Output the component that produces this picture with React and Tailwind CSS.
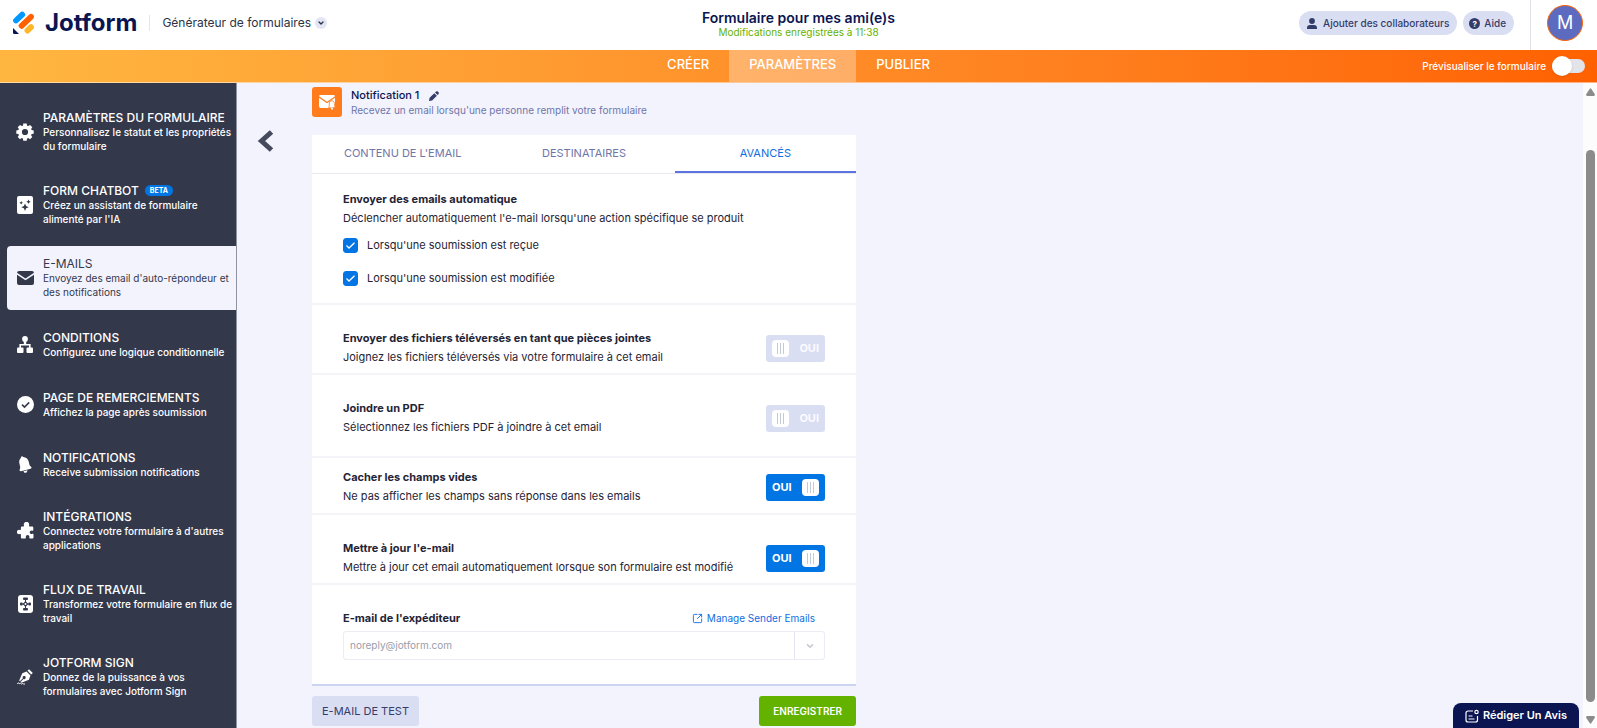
import React from 'react';
import { ChevronDown, SquareArrowOutUpRight } from 'lucide-react';

const GearIcon = () => (
  <svg viewBox="0 0 18 18" className="size-[18px]" fill="currentColor">
    <path
      fillRule="evenodd"
      d="M7.300.6h3.400l.4 2.100 1.100.4L14 1.900l2.300 2.300-1.200 1.800.5 1.100 2.100.4v3.200l-2.100.4-.5 1.100 1.200 1.800-2.300 2.300-1.800-1.200-1.100.5-.4 2.100H7.300l-.4-2.100-1.100-.5L4 16.300 1.700 14l1.200-1.800-.5-1.100-2.100-.4V7.500l2.100-.4.5-1.100-1.200-1.800L4 1.900l1.800 1.200 1.100-.4zM9 5.900a3.100 3.100 0 1 0 0 6.200 3.100 3.100 0 0 0 0-6.200z"
    />
  </svg>
);
const ChatbotIcon = () => (
  <svg viewBox="0 0 16 18" className="h-[18px] w-4">
    <rect width="16" height="18" rx="2" fill="currentColor" />
    <g fill="#34384b">
      <path d="M8 7.500l1.100 2.600L11.700 11.200l-2.600 1.100L8 15l-1.100-2.700-2.600-1.100 2.600-1.100z" />
      <path d="M11.500 3.500l.7 1.500 1.500.7-1.500.7-.7 1.500-.7-1.500-1.500-.7 1.500-.7z" />
      <path d="M4.200 5l.6 1.200 1.200.6-1.200.6-.6 1.200-.6-1.200-1.200-.6 1.200-.6z" />
    </g>
  </svg>
);
const MailIcon = () => (
  <svg viewBox="0 0 17 14" className="h-3.5 w-[17px]" fill="currentColor">
    <path d="M2 0h13a2 2 0 0 1 2 1.700L8.500 7.500 0 1.700A2 2 0 0 1 2 0z" />
    <path d="M0 3.700l8.500 5.600L17 3.700V12a2 2 0 0 1-2 2H2a2 2 0 0 1-2-2z" />
  </svg>
);
const TreeIcon = () => (
  <svg viewBox="0 0 16 17" className="h-[17px] w-4" fill="currentColor">
    <circle cx="8" cy="3" r="2.900" />
    <path d="M6.800 4h2.400v4h4.400v4h-1.600V9.600H4V12H2.400V8h4.400z" />
    <rect x="0" y="11.500" width="6.500" height="5.500" rx="1" />
    <rect x="9.500" y="11.500" width="6.500" height="5.500" rx="1" />
  </svg>
);
const CheckCircleIcon = () => (
  <svg viewBox="0 0 17 17" className="size-[17px]">
    <circle cx="8.500" cy="8.500" r="8.500" fill="currentColor" />
    <path d="M5 8.600l2.500 2.500 4.700-4.700" fill="none" stroke="#34384b" strokeWidth="1.500" />
  </svg>
);
const BellIcon = () => (
  <svg viewBox="0 0 16 17" className="h-[17px] w-4" fill="currentColor">
    <path d="M4.600.4c.7-.2 1.300.1 1.600.7 2.700.2 4.900 1.900 5.500 4.500l.7 3c.2.900.8 1.700 1.600 2.200.9.600.6 1.700-.3 1.900L4 15.200c-1.100.3-1.800-.7-1.300-1.600.5-1 .7-2 .4-3l-.7-3C1.800 5.200 2.500 3 4 1.700c-.1-.6 0-1.100.6-1.300z" />
    <path d="M6.500 15.200l3.800-1c.2 1.100-.4 2.200-1.500 2.500-1 .3-2-.4-2.300-1.500z" />
  </svg>
);
const PuzzleIcon = () => (
  <svg viewBox="0 0 17 17" className="size-[17px]" fill="currentColor">
    <path d="M7 3.500A2.700 2.700 0 1 1 12 3.500c0 .5.200.9.500 1.100h2.500c.8 0 1.300.5 1.300 1.300v2.300c-.3.400-.8.500-1.300.5a1.700 1.700 0 1 0 0 3.200c.6-.1 1.100 0 1.500.4v2.900c0 .8-.5 1.300-1.300 1.300h-2.400c-.5-.3-.6-.7-.5-1.200a1.800 1.800 0 1 0-3.400 0c.1.500 0 .9-.5 1.200H5.200c-.8 0-1.300-.5-1.300-1.300v-2.700c-.3-.4-.7-.5-1.100-.4A2.200 2.200 0 1 1 2.800 8c.5 0 .9-.1 1.100-.5V5.900c0-.8.500-1.300 1.300-1.300h1.300c.4-.2.500-.6.500-1.100z" />
  </svg>
);
const FlowIcon = () => (
  <svg viewBox="0 0 15 18" className="h-[18px] w-[15px]">
    <rect width="15" height="18" rx="3" fill="currentColor" />
    <g fill="#34384b">
      <rect x="5" y="2.500" width="5" height="2.600" rx="1" />
      <rect x="5" y="12.900" width="5" height="2.600" rx="1" />
      <rect x="2" y="7.500" width="2.600" height="3" rx="1" />
      <rect x="10.400" y="7.500" width="2.600" height="3" rx="1" />
      <path d="M7.500 5.900L10.300 9l-2.800 3.100L4.700 9z" />
      <path d="M7 5h1v8H7zM4 8.500h7v1H4z" />
    </g>
    <circle cx="7.500" cy="9" r="1" fill="currentColor" />
  </svg>
);
const PenIcon = () => (
  <svg viewBox="0 0 16 16" className="size-4">
    <path d="M10.500 1.800l1.500-1.600 3.800 3.800-1.600 1.500z" fill="currentColor" />
    <path d="M9.500 2.500l4 4-1.600 4.200-7.500 3.100-.9-.9 3-3a1.500 1.500 0 1 0-.6-.6l-3 3-.7-.8 3.100-7.200z" fill="currentColor" />
    <path d="M.3 14.800c1-1.500 1.700-1 1.900 0 .9-.8 1.600-.5 2.200.2.700-.8 1.500-.5 2.100 0h1.500" fill="none" stroke="currentColor" />
  </svg>
);

const NAV = [
  { icon: GearIcon, title: 'PARAMÈTRES DU FORMULAIRE', desc: 'Personnalisez le statut et les propriétés du formulaire' },
  { icon: ChatbotIcon, title: 'FORM CHATBOT', badge: 'BETA', desc: "Créez un assistant de formulaire alimenté par l'IA" },
  { icon: MailIcon, title: 'E-MAILS', desc: "Envoyez des email d'auto-répondeur et des notifications", active: true },
  { icon: TreeIcon, title: 'CONDITIONS', desc: 'Configurez une logique conditionnelle' },
  { icon: CheckCircleIcon, title: 'PAGE DE REMERCIEMENTS', desc: 'Affichez la page après soumission' },
  { icon: BellIcon, title: 'NOTIFICATIONS', desc: 'Receive submission notifications' },
  { icon: PuzzleIcon, title: 'INTÉGRATIONS', desc: "Connectez votre formulaire à d'autres applications" },
  { icon: FlowIcon, title: 'FLUX DE TRAVAIL', desc: 'Transformez votre formulaire en flux de travail' },
  { icon: PenIcon, title: 'JOTFORM SIGN', desc: 'Donnez de la puissance à vos formulaires avec Jotform Sign' },
];

function Header() {
  return (
    <header className="flex h-[50px] shrink-0 items-center bg-white pb-1">
      <div className="flex flex-1 items-center">
        <a href="#" className="ml-3 flex items-center gap-2.5 text-[#0a1551]">
          <svg viewBox="0 0 23 24" className="h-6 w-[23px]" strokeLinecap="round" strokeWidth="5.800">
            <path d="M4 9.500l6.200-5.800" stroke="#0099ff" />
            <path d="M9.600 14.800l9.400-9" stroke="#ff6100" />
            <path d="M15.400 19.600l3.600-3.400" stroke="#ffb629" />
            <path d="M1 17L7 23H2.300A1.300 1.300 0 0 1 1 21.700z" fill="#0a1551" />
          </svg>
          <span className="text-[24px]/[30px] font-bold">Jotform</span>
        </a>
        <button type="button" className="ml-3 flex items-center gap-1 border-l border-[#e3e5f5] pl-3 text-[#2c3345]">
          <span className="text-xs">Générateur de formulaires</span>
          <span className="grid size-3 place-items-center rounded-full bg-[#e3e5f5]">
            <ChevronDown className="size-2" strokeWidth={4} />
          </span>
        </button>
      </div>
      <div className="text-center">
        <h1 className="text-sm/[18px] font-semibold text-[#0a1551]">Formulaire pour mes ami(e)s</h1>
        <p className="text-[10px]/[10px] text-[#64b200]">Modifications enregistrées à 11:38</p>
      </div>
      <div className="-mb-1 flex flex-1 items-center justify-end self-stretch">
        <button type="button" className="mb-1 flex h-6 items-center gap-1.5 rounded-full bg-[#dadef3] px-2 text-[10px] font-medium text-[#343c6a]">
          <svg viewBox="0 0 10 11" className="h-[11px] w-2.5" fill="currentColor">
            <circle cx="5" cy="3" r="2.900" />
            <path d="M0 11V9.500C0 8 1.300 7 2.800 7h4.400C8.700 7 10 8 10 9.500V11z" />
          </svg>
          Ajouter des collaborateurs
        </button>
        <button type="button" className="mb-1 ml-1.5 flex h-6 items-center gap-1 rounded-full bg-[#dadef3] px-1.5 pr-2 text-[10px] font-medium text-[#343c6a]">
          <span className="grid size-[11px] place-items-center rounded-full bg-[#343c6a] text-[8px] font-bold text-white">?</span>
          Aide
        </button>
        <div className="ml-4 flex items-center self-stretch border-l border-[#e0e0e8] pr-3.5 pl-4">
          <button type="button" className="mb-1 grid size-9 place-items-center rounded-full border border-[#ff6100] bg-[#5c6bc0] text-lg text-white">M</button>
        </div>
      </div>
    </header>
  );
}

function TopNav() {
  return (
    <nav className="flex h-[33px] shrink-0 items-stretch border-b border-white/50 bg-linear-to-r from-[#ffb641] to-[#ff6100] bg-origin-border px-3 text-white">
      <div className="flex-1" />
      <div className="flex text-[13px] font-medium">
        <a href="#" className="flex items-center px-5 pb-0.5">CRÉER</a>
        <a href="#" className="flex items-center bg-white/30 px-5 pb-0.5">PARAMÈTRES</a>
        <a href="#" className="flex items-center px-5 pb-0.5">PUBLIER</a>
      </div>
      <div className="flex flex-1 items-center justify-end">
        <label className="flex items-center gap-1.5 text-[10px] font-medium">
          Prévisualiser le formulaire
          <input type="checkbox" role="switch" className="peer sr-only" />
          <span className="flex h-3.5 w-[33px] items-center rounded-full bg-[#e3e3ea] peer-checked:justify-end">
            <span className="size-5 rounded-full bg-white shadow-sm" />
          </span>
        </label>
      </div>
    </nav>
  );
}

function Sidebar() {
  return (
    <nav className="flex w-[237px] shrink-0 flex-col gap-[9px] overflow-hidden border-r border-[#8f92a0] bg-[#34384b] pt-[17px] pl-[7px]">
      {NAV.map(({ icon: Icon, title, badge, desc, active }) => (
        <a
          key={title}
          href="#"
          className={
            active
              ? 'flex min-h-[51px] shrink-0 items-center rounded-l bg-[#f3f3fe] pt-2.5 pb-[11px] text-[#34384b]'
              : 'flex min-h-[51px] shrink-0 items-center pt-2.5 pb-[11px] font-medium text-white'
          }
        >
          <span className="flex w-9 shrink-0 justify-center">
            <Icon />
          </span>
          <span className="min-w-0 flex-1">
            <span className="flex items-center gap-1.5 text-xs/[15px]">
              {title}
              {badge && (
                <span className="rounded-full bg-[#0075e3] px-[5px] text-[7px]/[11px] font-bold">{badge}</span>
              )}
            </span>
            <span className="block text-[10px]/[14px]">{desc}</span>
          </span>
        </a>
      ))}
    </nav>
  );
}

function Toggle({ label, on }) {
  return (
    <button
      type="button"
      role="switch"
      aria-checked={on}
      aria-label={label}
      className={
        on
          ? 'flex h-[27px] w-[59px] shrink-0 items-center justify-between rounded-[3px] bg-[#0075e3] px-1.5 text-[11px] font-bold text-white'
          : 'flex h-[27px] w-[59px] shrink-0 flex-row-reverse items-center justify-between rounded-[3px] bg-[#dadef3] px-1.5 text-[11px] font-bold text-[#fafbff]'
      }
    >
      OUI
      <span className="flex h-[17px] w-[17px] items-center justify-center gap-0.5 rounded-sm bg-white">
        <span className="h-[11px] w-px bg-[#c3cad8]" />
        <span className="h-[11px] w-px bg-[#c3cad8]" />
        <span className="h-[11px] w-px bg-[#c3cad8]" />
      </span>
    </button>
  );
}

function CheckRow({ children }) {
  return (
    <label className="flex items-center gap-[9px] text-[11px]/[15px]">
      <span className="grid size-[15px] place-items-center">
        <input type="checkbox" defaultChecked className="peer col-start-1 row-start-1 size-[15px] appearance-none rounded-[3px] border border-[#c3cad8] checked:border-[#0075e3] checked:bg-[#0075e3]" />
        <svg viewBox="0 0 9 7" className="pointer-events-none col-start-1 row-start-1 hidden h-[7px] w-[9px] peer-checked:block" fill="none" stroke="#fff" strokeWidth="1.300">
          <path d="M.5 3.500l2.500 2.500 5.500-5.300" />
        </svg>
      </span>
      {children}
    </label>
  );
}

function SettingText({ title, children }) {
  return (
    <div>
      <h3 className="text-[11px]/[19px] font-bold">{title}</h3>
      <p className="text-[11px]/[19px]">{children}</p>
    </div>
  );
}

const ROW_SPACING = {
  normal: 'pt-6 pb-1.5',
  roomy: 'pt-6 pb-[19px]',
  compact: 'pt-2.5 pb-[7px]',
};

function SettingRow({ title, desc, on, spacing = 'normal' }) {
  return (
    <section className={`flex items-center justify-between border-b-2 border-[#f3f3f8] px-[31px] ${ROW_SPACING[spacing]}`}>
      <SettingText title={title}>{desc}</SettingText>
      <Toggle label={title} on={on} />
    </section>
  );
}

function EmailCard() {
  return (
    <div className="border-b-2 border-[#cdd3f2] bg-white text-[#1f2436]">
      <div className="grid h-[39px] grid-cols-3 border-b border-[#e8e8f0] text-[11px] text-[#6f76a7]">
        <button type="button" className="border-b-2 border-transparent">CONTENU DE L'EMAIL</button>
        <button type="button" className="border-b-2 border-transparent">DESTINATAIRES</button>
        <button type="button" className="border-b-2 border-[#5c73e0] text-[#0f6ee0]">AVANCÉS</button>
      </div>
      <section className="flex flex-col border-b-2 border-[#f3f3f8] px-[31px] pt-4 pb-[17px]">
        <SettingText title="Envoyer des emails automatique">
          Déclencher automatiquement l'e-mail lorsqu'une action spécifique se produit
        </SettingText>
        <div className="mt-2.5 flex flex-col gap-[18px]">
          <CheckRow>Lorsqu'une soumission est reçue</CheckRow>
          <CheckRow>Lorsqu'une soumission est modifiée</CheckRow>
        </div>
      </section>
      <SettingRow title="Envoyer des fichiers téléversés en tant que pièces jointes" desc="Joignez les fichiers téléversés via votre formulaire à cet email" on={false} />
      <SettingRow title="Joindre un PDF" desc="Sélectionnez les fichiers PDF à joindre à cet email" on={false} spacing="roomy" />
      <SettingRow title="Cacher les champs vides" desc="Ne pas afficher les champs sans réponse dans les emails" on spacing="compact" />
      <SettingRow title="Mettre à jour l'e-mail" desc="Mettre à jour cet email automatiquement lorsque son formulaire est modifié" on />
      <section className="px-[31px] pt-6 pb-6">
        <div className="mb-1 flex items-center justify-between pr-2.5">
          <label htmlFor="sender" className="text-[11px]/[18px] font-bold">E-mail de l'expéditeur</label>
          <a href="#" className="flex items-center gap-1 text-[10px]/[18px] text-[#0f6ee0]">
            <SquareArrowOutUpRight className="size-[11px]" />
            Manage Sender Emails
          </a>
        </div>
        <div className="grid h-[29px] grid-cols-[1fr_30px] rounded-[3px] border border-[#ebecf4]">
          <select id="sender" className="col-span-2 col-start-1 row-start-1 appearance-none bg-transparent px-1.5 text-[10px] text-[#9b9ca8]">
            <option>noreply@jotform.com</option>
          </select>
          <span className="pointer-events-none col-start-2 row-start-1 grid place-items-center border-l border-[#e3e5f0] text-[#c8c9d0]">
            <ChevronDown className="size-2.5" strokeWidth={4} />
          </span>
        </div>
      </section>
    </div>
  );
}

export default function App() {
  return (
    <div className="flex h-screen flex-col overflow-hidden bg-[#f3f3fe] font-['Inter',sans-serif]">
      <Header />
      <TopNav />
      <div className="flex min-h-0 flex-1">
        <Sidebar />
        <main className="flex min-w-0 flex-1 overflow-hidden">
          <div className="w-[75px] shrink-0 pt-[47px] pl-5">
            <button type="button" aria-label="Retour" className="block text-[#454a5c]">
              <svg viewBox="0 0 17 22" className="h-[22px] w-[17px]" fill="none" stroke="currentColor" strokeWidth="5">
                <path d="M14.500 2L4.500 11l10 9" />
              </svg>
            </button>
          </div>
          <div className="w-[544px] shrink-0 pt-1">
            <div className="mb-[17px] flex items-start gap-[9px]">
              <span className="grid size-[30px] place-items-center rounded-[3px] bg-[#ff7b1c]">
                <svg viewBox="0 0 17 15" className="h-[15px] w-[17px]">
                  <path d="M1.500 0h13A1.500 1.500 0 0 1 16 1.300L8 6.800 0 1.300A1.500 1.500 0 0 1 1.500 0z" fill="#fff" />
                  <path d="M0 2.800l8 5.500 8-5.500V11a2 2 0 0 1-2 2H2a2 2 0 0 1-2-2z" fill="#fff" />
                  <path d="M10.300 8c.2-1.500 1.400-2.500 2.800-2.200 1.500.2 2.400 1.500 2.300 3l.1 2 1 1.500-6.800.8.500-2z" fill="#fff" stroke="#ff7b1c" strokeWidth=".8" />
                  <circle cx="13" cy="13.700" r="1.100" fill="#fff" />
                </svg>
              </span>
              <div className="pt-px">
                <div className="flex items-center gap-2.5">
                  <h2 className="text-[11px]/[15px] font-medium text-[#0a1551]">Notification 1</h2>
                  <button type="button" aria-label="Modifier" className="text-[#343c6a]">
                    <svg viewBox="0 0 10 10" className="size-2.5" fill="currentColor">
                      <path d="M6.800.8c.6-.8 1.500-.8 2-.2l.7.700c.5.600.5 1.300-.1 1.900L8.600 4 6 1.500zM5.300 2.200l2.600 2.600-4.800 4.600L0 10l.6-3.200z" />
                    </svg>
                  </button>
                </div>
                <p className="text-[10px]/[15px] text-[#6f76a7]">Recevez un email lorsqu'une personne remplit votre formulaire</p>
              </div>
            </div>
            <EmailCard />
            <div className="mt-2.5 flex justify-between">
              <button type="button" className="h-[30px] rounded-[3px] bg-[#dadef3] px-2.5 text-[11px] text-[#343c6a]">E-MAIL DE TEST</button>
              <button type="button" className="h-[30px] rounded-[3px] bg-[#64b200] px-3.5 text-[10px] font-semibold text-white">ENREGISTRER</button>
            </div>
          </div>
          <div className="flex flex-1 items-end justify-end pr-1">
            <button type="button" className="flex h-[25px] items-center gap-1 rounded-t-lg bg-[#0a1551] px-3 text-[11px] font-semibold text-white">
              <svg viewBox="0 0 14 14" className="size-3.5" fill="none" stroke="currentColor" strokeWidth="1.200">
                <path d="M8 2H3a2 2 0 0 0-2 2v7a2 2 0 0 0 2 2h7.500a2 2 0 0 0 2-2V7M3.500 7h4M3.500 10h6" />
                <circle cx="11.500" cy="3" r="1.700" />
              </svg>
              Rédiger Un Avis
            </button>
          </div>
        </main>
        <div aria-hidden="true" className="flex w-3.5 shrink-0 flex-col items-center bg-[#fcfcfc] pt-[5px] pb-1">
          <svg viewBox="0 0 9 8" className="h-2 w-[9px]" fill="#8b8b8b">
            <path d="M3.800.8a.9.900 0 0 1 1.400 0L9 6.500 8.300 8H.7L0 6.500z" />
          </svg>
          <div className="h-[54px]" />
          <div className="w-[9px] flex-1 rounded-full bg-[#8b8b8b]" />
          <div className="h-3.5" />
          <svg viewBox="0 0 9 8" className="h-2 w-[9px]" fill="#8b8b8b">
            <path d="M3.800 7.200a.9.900 0 0 0 1.400 0L9 1.500 8.300 0H.7L0 1.500z" />
          </svg>
        </div>
      </div>
    </div>
  );
}
